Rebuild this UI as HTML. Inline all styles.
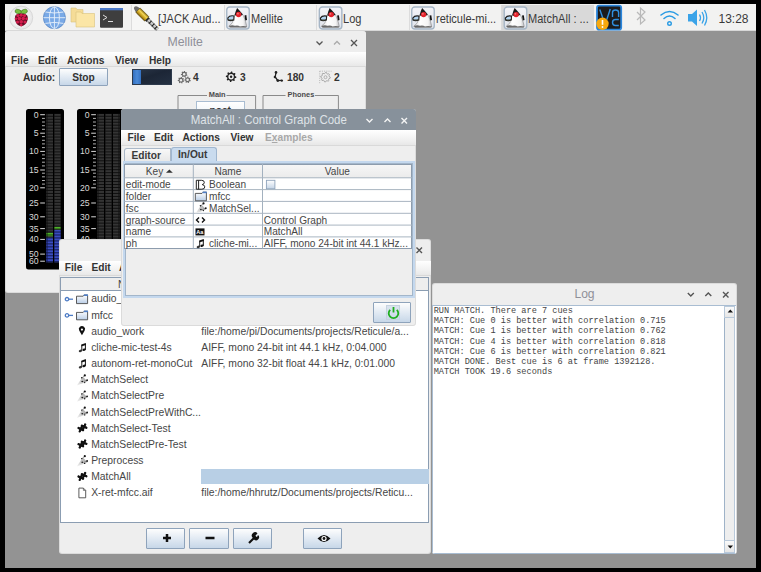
<!DOCTYPE html>
<html><head><meta charset="utf-8">
<style>
*{box-sizing:border-box;margin:0;padding:0}
html,body{width:761px;height:572px;overflow:hidden;background:#000}
body{position:relative;font-family:"Liberation Sans",sans-serif;font-size:9px;color:#333}
.a{position:absolute}
#desk{left:5px;top:4px;width:751px;height:564px;background:#939393}
/* taskbar */
#tb{left:5px;top:4px;width:751px;height:27px;background:#f2f2f1}
.tbt{font-size:12px;color:#3a3a3a;white-space:nowrap;line-height:14px;transform:scaleX(0.92);transform-origin:0 0}
/* windows */
.win{background:#eeeeee;overflow:hidden;border-radius:3px;box-shadow:inset 0 0 0 1px rgba(0,0,0,.08)}
.ttl{left:0;top:0;right:0;height:21px;text-align:center;color:#8f9099;font-size:12.6px;line-height:23px;white-space:nowrap}
.menu{font-weight:bold;font-size:10.2px;color:#333;white-space:nowrap}
.mb{background:linear-gradient(#ffffff,#f1f1f1 60%,#e6e6e6);box-shadow:inset 0 -1px 0 #d9d9d9}
.btn{border:1px solid #8ea3bb;border-radius:1px;background:linear-gradient(#fdfdfd,#dfe8f2 55%,#c7d7e8)}
.mono{font-family:"Liberation Mono",monospace}
</style></head><body>
<svg width="0" height="0" style="position:absolute"><defs>
<linearGradient id="fold" x1="0" y1="0" x2="0" y2="1"><stop offset="0" stop-color="#fff"/><stop offset="1" stop-color="#b9cde6"/></linearGradient>
<linearGradient id="chk" x1="0" y1="0" x2="0" y2="1"><stop offset="0" stop-color="#fff"/><stop offset="1" stop-color="#c4d4e6"/></linearGradient>
<linearGradient id="procg" x1="0" y1="1" x2="1" y2="0"><stop offset="0" stop-color="#f4f4f4"/><stop offset="1" stop-color="#9a9a9a"/></linearGradient>
<pattern id="seg" width="7" height="2.968" y="4.8" patternUnits="userSpaceOnUse"><rect width="7" height="2.968" fill="#0e0e0e"/><rect x="0.5" y="0" width="6" height="2" fill="#343434"/></pattern>
<pattern id="segg" width="7" height="2.968" y="4.8" patternUnits="userSpaceOnUse"><rect width="7" height="2.968" fill="#15300a"/><rect x="0.5" y="0" width="6" height="2" fill="#4fb52a"/></pattern>
<pattern id="segb" width="7" height="2.968" y="4.8" patternUnits="userSpaceOnUse"><rect width="7" height="2.968" fill="#0f1648"/><rect x="0.5" y="0" width="6" height="2" fill="#3a4cc0"/></pattern>
</defs></svg>
<div id="desk" class="a"></div>
<div id="tb" class="a">
</div>
<svg class="a" style="left:0;top:0" width="761" height="40">
 <defs>
  <linearGradient id="dukeb" x1="0" y1="0" x2="1" y2="0"><stop offset="0" stop-color="#d8d8d8"/><stop offset="0.35" stop-color="#ffffff"/><stop offset="0.8" stop-color="#f4f4f4"/><stop offset="1" stop-color="#bdbdc2"/></linearGradient>
  <linearGradient id="gold" x1="0" y1="0" x2="0" y2="1"><stop offset="0" stop-color="#8a6a08"/><stop offset="0.35" stop-color="#f2d558"/><stop offset="0.7" stop-color="#c9a020"/><stop offset="1" stop-color="#7a5a05"/></linearGradient>
  <linearGradient id="silv" x1="0" y1="0" x2="0" y2="1"><stop offset="0" stop-color="#666"/><stop offset="0.4" stop-color="#e8e8e8"/><stop offset="1" stop-color="#555"/></linearGradient>
  <linearGradient id="dk" x1="0" y1="0" x2="0" y2="1"><stop offset="0" stop-color="#f4f4f8"/><stop offset="1" stop-color="#dfe3ea"/></linearGradient>
  <g id="duke">
   <rect x="0.75" y="0.75" width="22.5" height="22" rx="3" fill="url(#dk)" stroke="#a6b6c6" stroke-width="1.4"/>
   <path d="M8.6 8.8 Q7.5 13 6.3 16.5 Q4.5 18.8 2.8 19.8 Q3 21 5 21 L19.5 21.2 Q21 20.8 20.6 19.5 Q19.5 15 18.8 13 Q17.8 10.5 16.8 8.4 Q13 10.5 8.6 8.8 Z" fill="url(#dukeb)" stroke="#777" stroke-width="0.5"/>
   <path d="M3 19.8 Q6 18.5 9 19.5 Q12 18.8 14 20.2 Q17 19.2 20.5 20.2 L20.6 21 L4 21.1Z" fill="#555" opacity="0.85"/>
   <path d="M11.1 1.8 Q14.2 5 16.9 8.2 Q13 11.2 8.6 8.9 Q9.5 5 11.1 1.8Z" fill="#1a1a1a"/>
   <circle cx="12.6" cy="8.3" r="2.7" fill="#e3232c"/>
   <circle cx="11.9" cy="7.5" r="0.9" fill="#f47a7e"/>
   <path d="M1.8 11.8 Q3.5 9 8 9.8 L7.8 13.8 Q4.2 15 2 13.8 Z" fill="#b2d4f0" stroke="#1e1e1e" stroke-width="1.1"/>
   <path d="M2 13.8 Q4.2 15 7.8 13.8 L7.8 12.7 Q4.5 13.8 2.1 12.7Z" fill="#3a3a2a"/>
   <path d="M18.5 9.3 L20.3 8.9 L21 13.8 L19.3 14.3 Z" fill="#151515"/>
  </g>
 </defs>
 <line x1="5" y1="30.5" x2="756" y2="30.5" stroke="#d8d8d8"/>
 <!-- raspberry -->
 <circle cx="21.1" cy="17.7" r="11.6" fill="#e9e9e9" stroke="#d2d2d2" stroke-width="0.8"/>
 <circle cx="20.6" cy="17.2" r="10" fill="#efefef"/>
 <ellipse cx="18.2" cy="11.6" rx="3.3" ry="2.2" transform="rotate(20 18.2 11.6)" fill="#79c043" stroke="#3b6a1c" stroke-width="0.5"/>
 <ellipse cx="24.2" cy="11.6" rx="3.3" ry="2.2" transform="rotate(-20 24.2 11.6)" fill="#79c043" stroke="#3b6a1c" stroke-width="0.5"/>
 <path d="M15 17 Q15 13.5 21.2 13.5 Q27.5 13.5 27.7 17 Q28.2 21 25 24.5 Q23 26.3 21.2 26.3 Q19.3 26.3 17.3 24.5 Q14.4 21 15 17Z" fill="#5e0c22"/>
 <g fill="#d51c4d"><circle cx="17.9" cy="15.6" r="1.6"/><circle cx="21.2" cy="15.2" r="1.6"/><circle cx="24.5" cy="15.6" r="1.6"/>
 <circle cx="16" cy="18.8" r="1.3"/><circle cx="19.3" cy="18.6" r="1.8"/><circle cx="23.2" cy="18.6" r="1.8"/><circle cx="26.5" cy="18.8" r="1.3"/>
 <circle cx="17.5" cy="22" r="1.6"/><circle cx="21.2" cy="21.8" r="1.8"/><circle cx="25" cy="22" r="1.6"/><circle cx="21.2" cy="25" r="1.4"/></g>
 <!-- globe -->
 <circle cx="54.4" cy="17.7" r="11" fill="#79a9e6" stroke="#5b88c4" stroke-width="0.8"/>
 <g stroke="#e8f1fb" stroke-width="0.9" fill="none"><ellipse cx="54.4" cy="17.7" rx="5" ry="10.8"/><line x1="54.4" y1="6.9" x2="54.4" y2="28.5"/><line x1="43.5" y1="17.7" x2="65.3" y2="17.7"/><path d="M45.3 12 Q54.4 14 63.5 12"/><path d="M45.3 23.4 Q54.4 21.4 63.5 23.4"/></g>
 <!-- folders -->
 <path d="M71 8 L76 8 L77 9.5 L83 9.5 L83 22 L71 22Z" fill="#f5dc97" stroke="#d9c27d" stroke-width="0.6"/>
 <path d="M76 12 L81 12 L82 13.5 L94.5 13.5 L94.5 27 L76 27Z" fill="#fbe6a6" stroke="#d9c27d" stroke-width="0.6"/>
 <!-- terminal -->
 <rect x="100" y="8" width="23" height="19.8" rx="1" fill="#3e3e3e"/>
 <rect x="100" y="8" width="23" height="2.3" fill="#4a78c8"/>
 <path d="M103 15 L107 17.5 L103 20" stroke="#ddd" stroke-width="1" fill="none"/>
 <line x1="108" y1="21.5" x2="113" y2="21.5" stroke="#ddd" stroke-width="1"/>
 <!-- separators -->
 <g stroke="#dcdcdc"><line x1="131.5" y1="5" x2="131.5" y2="30"/><line x1="224.5" y1="5" x2="224.5" y2="30"/><line x1="316.5" y1="5" x2="316.5" y2="30"/><line x1="409.5" y1="5" x2="409.5" y2="30"/><line x1="501.5" y1="5" x2="501.5" y2="30"/></g>
 <rect x="132" y="5" width="92" height="25" fill="#f6f6f5"/>
 <rect x="502" y="5" width="92" height="25" fill="#d9d9d9"/>
 <!-- jack -->
 <g transform="translate(134.5,6.8) rotate(44.5)">
  <path d="M0 0 Q0 -1.6 1.6 -2 L5 -3 L5 3 L1.6 2 Q0 1.6 0 0Z" fill="#6e6e6e"/>
  <rect x="4.8" y="-3.1" width="12.6" height="6.2" rx="0.8" fill="url(#gold)" stroke="#4a3a08" stroke-width="0.5"/>
  <rect x="17.2" y="-2.4" width="2" height="4.8" fill="#2a2a2a"/>
  <rect x="19" y="-1.9" width="13.6" height="3.8" rx="1.2" fill="url(#silv)"/>
  <g fill="#1e1e1e"><rect x="21.5" y="-1.9" width="1.1" height="3.8"/><rect x="25.5" y="-1.9" width="1.1" height="3.8"/><rect x="29.3" y="-1.9" width="1.1" height="3.8"/></g>
 </g>
 <use href="#duke" x="226" y="6.2"/>
 <use href="#duke" x="318.6" y="6.3"/>
 <use href="#duke" x="411" y="6.3"/>
 <use href="#duke" x="503.5" y="6.3"/>
 <!-- vnc -->
 <rect x="597" y="5.6" width="24.2" height="24" rx="2.2" fill="#1b1b1d" stroke="#2b86dc" stroke-width="1.8"/>
 <path d="M599.8 9.5 L602.8 18" stroke="#2f8fe0" stroke-width="1.4" fill="none"/>
 <path d="M610.3 9 L606.8 19.5" stroke="#2f8fe0" stroke-width="1.4" fill="none"/>
 <path d="M612.5 17 L612.5 12.5 Q612.5 10 615.5 10 Q618.6 10 618.6 12.5 L618.6 17" stroke="#2f8fe0" stroke-width="1.4" fill="none"/>
 <path d="M618.8 19.5 L615.5 19.5 Q612.5 19.5 612.5 22.5 Q612.5 25.5 615.5 25.5 L618.8 25.5" stroke="#2f8fe0" stroke-width="1.4" fill="none"/>
 <circle cx="602.5" cy="23.8" r="6.2" fill="#f7a80e"/>
 <path d="M602.5 20 L602.5 24.8" stroke="#fff" stroke-width="1.6"/><circle cx="602.5" cy="27" r="0.9" fill="#fff"/>
 <!-- bluetooth -->
 <path d="M637 12 L645 20 L640.5 24 L640.5 8 L645 12 L637 20" stroke="#b9b9b9" stroke-width="1.2" fill="none"/>
 <!-- wifi -->
 <g stroke="#2a9be3" stroke-width="1.6" fill="none" stroke-linecap="round"><path d="M661 15 Q669.5 8 678 15"/><path d="M664 18.5 Q669.5 13.5 675 18.5"/></g>
 <circle cx="669.5" cy="23.5" r="1.8" fill="none" stroke="#2a9be3" stroke-width="1.4"/>
 <!-- volume -->
 <path d="M688 14 L692 14 L697 9.5 L697 26 L692 21.5 L688 21.5Z" fill="#3aa3e8"/>
 <g stroke="#3aa3e8" stroke-width="1.3" fill="none"><path d="M699.5 14.5 Q701.5 17.8 699.5 21"/><path d="M702 12 Q705.5 17.8 702 23.5"/><path d="M704.5 10 Q709 17.8 704.5 25.5"/></g>
</svg>
<div class="a tbt" style="left:158px;top:12px">[JACK Aud...</div>
<div class="a tbt" style="left:251px;top:12px">Mellite</div>
<div class="a tbt" style="left:343px;top:12px">Log</div>
<div class="a tbt" style="left:435.5px;top:12px">reticule-mi...</div>
<div class="a tbt" style="left:528px;top:12px">MatchAll : ...</div>
<div class="a tbt" style="left:718.5px;top:12px;transform:none">13:28</div>

<!-- Mellite window -->
<div id="mel" class="a win" style="left:5px;top:31px;width:361px;height:262px">
  <div class="a ttl" style="background:#eeeeee"><span style="display:inline-block;transform:scaleX(0.975)">Mellite</span></div>
  <div class="a mb" style="left:0;top:21px;width:361px;height:15px"></div>
  <div class="a menu" style="left:6px;top:23.8px">File</div>
  <div class="a menu" style="left:33px;top:23.8px">Edit</div>
  <div class="a menu" style="left:62px;top:23.8px">Actions</div>
  <div class="a menu" style="left:110px;top:23.8px">View</div>
  <div class="a menu" style="left:144px;top:23.8px">Help</div>
  <div class="a menu" style="left:18px;top:41px">Audio:</div>
  <div class="a btn menu" style="left:54px;top:37.2px;width:49px;height:18.3px;text-align:center;line-height:18.5px">Stop</div>
  <div class="a" style="left:126.8px;top:38.4px;width:40.2px;height:15.2px;background:linear-gradient(160deg,#2a3648 0%,#1c2636 45%,#243042 100%);border:1px solid #2d3a4c"><div class="a" style="left:0;top:0;width:8.7px;height:13.2px;background:linear-gradient(90deg,#3470c0,#4a8ad8 50%,#3470c0)"></div></div>
  <div class="a menu" style="left:188px;top:41px">4</div>
  <div class="a menu" style="left:235px;top:41px">3</div>
  <div class="a menu" style="left:282px;top:41px">180</div>
  <div class="a menu" style="left:329px;top:41px">2</div>
  <svg class="a" style="left:0;top:0" width="361" height="262">
   
   
   
   <path d="M226.10,40.40 L227.13,40.50 L227.63,42.00 L228.32,42.37 L229.85,41.95 L230.51,42.76 L229.80,44.17 L230.02,44.92 L231.40,45.70 L231.30,46.73 L229.80,47.23 L229.43,47.92 L229.85,49.45 L229.04,50.11 L227.63,49.40 L226.88,49.62 L226.10,51.00 L225.07,50.90 L224.57,49.40 L223.88,49.03 L222.35,49.45 L221.69,48.64 L222.40,47.23 L222.18,46.48 L220.80,45.70 L220.90,44.67 L222.40,44.17 L222.77,43.48 L222.35,41.95 L223.16,41.29 L224.57,42.00 L225.32,41.78Z M228.79999999999998,45.7 A2.7,2.7 0 1 0 223.4,45.7 A2.7,2.7 0 1 0 228.79999999999998,45.7Z" fill="#222" fill-rule="evenodd"/><circle cx="226.1" cy="45.7" r="1.2" fill="#222"/><path d="M179.20,39.90 L179.93,39.98 L180.24,41.04 L180.70,41.32 L181.78,41.14 L182.17,41.77 L181.54,42.67 L181.60,43.20 L182.42,43.93 L182.17,44.63 L181.08,44.70 L180.70,45.08 L180.63,46.17 L179.93,46.42 L179.20,45.60 L178.67,45.54 L177.77,46.17 L177.14,45.78 L177.32,44.70 L177.04,44.24 L175.98,43.93 L175.90,43.20 L176.86,42.67 L177.04,42.16 L176.62,41.14 L177.14,40.62 L178.16,41.04 L178.67,40.86Z M180.5,43.2 A1.3,1.3 0 1 0 177.89999999999998,43.2 A1.3,1.3 0 1 0 180.5,43.2Z" fill="#6a6a6a" fill-rule="evenodd"/><path d="M176.00,45.90 L176.73,45.98 L177.04,47.04 L177.50,47.32 L178.58,47.14 L178.97,47.77 L178.34,48.67 L178.40,49.20 L179.22,49.93 L178.97,50.63 L177.88,50.70 L177.50,51.08 L177.43,52.17 L176.73,52.42 L176.00,51.60 L175.47,51.54 L174.57,52.17 L173.94,51.78 L174.12,50.70 L173.84,50.24 L172.78,49.93 L172.70,49.20 L173.66,48.67 L173.84,48.16 L173.42,47.14 L173.94,46.62 L174.96,47.04 L175.47,46.86Z M177.3,49.2 A1.3,1.3 0 1 0 174.7,49.2 A1.3,1.3 0 1 0 177.3,49.2Z" fill="#6a6a6a" fill-rule="evenodd"/><path d="M182.60,45.50 L183.33,45.58 L183.64,46.64 L184.10,46.92 L185.18,46.74 L185.57,47.37 L184.94,48.27 L185.00,48.80 L185.82,49.53 L185.57,50.23 L184.48,50.30 L184.10,50.68 L184.03,51.77 L183.33,52.02 L182.60,51.20 L182.07,51.14 L181.17,51.77 L180.54,51.38 L180.72,50.30 L180.44,49.84 L179.38,49.53 L179.30,48.80 L180.26,48.27 L180.44,47.76 L180.02,46.74 L180.54,46.22 L181.56,46.64 L182.07,46.46Z M183.9,48.8 A1.3,1.3 0 1 0 181.29999999999998,48.8 A1.3,1.3 0 1 0 183.9,48.8Z" fill="#6a6a6a" fill-rule="evenodd"/>
   <g stroke="#222" stroke-width="1.3" fill="none"><path d="M271 41.3 L270.2 46 L272.8 49.599999999999994 L276.6 49.400000000000006"/></g><g fill="#222"><circle cx="271" cy="41.400000000000006" r="1.3"/><circle cx="269.9" cy="46" r="1.2"/><circle cx="272.8" cy="49.599999999999994" r="1.4"/><circle cx="276.8" cy="49.599999999999994" r="1.2"/></g>
   <path d="M320.50,41.40 L321.44,41.49 L321.92,42.78 L322.56,43.12 L323.89,42.81 L324.49,43.53 L323.92,44.78 L324.13,45.48 L325.30,46.20 L325.21,47.14 L323.92,47.62 L323.58,48.26 L323.89,49.59 L323.17,50.19 L321.92,49.62 L321.22,49.83 L320.50,51.00 L319.56,50.91 L319.08,49.62 L318.44,49.28 L317.11,49.59 L316.51,48.87 L317.08,47.62 L316.87,46.92 L315.70,46.20 L315.79,45.26 L317.08,44.78 L317.42,44.14 L317.11,42.81 L317.83,42.21 L319.08,42.78 L319.78,42.57Z" fill="none" stroke="#9a9a9a" stroke-width="0.8"/><circle cx="320.5" cy="46.2" r="1.5" fill="none" stroke="#9a9a9a" stroke-width="0.7"/><path d="M314.7 40.2 L326.5 40.2 M314.7 40.2 L314.7 52.2" stroke="#aaa" stroke-width="0.8" stroke-dasharray="1 1.2" fill="none"/>
   <path d="M173 64.5 L202 64.5 M221.5 64.5 L250.6 64.5 L250.6 262 M173 64.5 L173 262" stroke="#8a8a8a" fill="none"/>
   <path d="M258 64.5 L280.5 64.5 M310 64.5 L333.4 64.5 L333.4 262 M258 64.5 L258 262" stroke="#8a8a8a" fill="none"/>
   <path d="M346 9 L352 15 M352 9 L346 15" stroke="#555" stroke-width="1.3"/>
   <path d="M311.5 10.5 L314.5 13.5 L317.5 10.5" stroke="#555" stroke-width="1.3" fill="none"/>
   <path d="M329 13.5 L332 10.5 L335 13.5" stroke="#aaa" stroke-width="1.3" fill="none"/>
  </svg>
  <div class="a" style="left:203.8px;top:59.2px;font-size:7.4px;font-weight:bold;color:#4a4a4a">Main</div>
  <div class="a" style="left:282.6px;top:59.2px;font-size:7.4px;font-weight:bold;color:#4a4a4a">Phones</div>
  <div class="a" style="left:191px;top:69.5px;width:48.5px;height:20px;background:linear-gradient(#fff,#e6eef6);border:1px solid #a9bdd2;text-align:center;font-weight:bold;font-size:10.2px;line-height:17px;color:#333">post</div>
  <div id="m1" class="a meter" style="left:21px;top:78px;width:38px;height:161px"><svg class="a" style="left:0;top:0" width="38" height="161"><rect x="0" y="0" width="38" height="160.5" rx="2.5" fill="#000"/><text x="12.6" y="8.6" text-anchor="end" font-size="8.7" fill="#d8d8d8" font-family="Liberation Sans">0</text><rect x="14.2" y="5.2" width="4.7" height="1" fill="#d8d8d8"/><text x="12.6" y="27.1" text-anchor="end" font-size="8.7" fill="#d8d8d8" font-family="Liberation Sans">5</text><rect x="14.2" y="23.7" width="4.7" height="1" fill="#d8d8d8"/><text x="12.6" y="45.3" text-anchor="end" font-size="8.7" fill="#d8d8d8" font-family="Liberation Sans">10</text><rect x="14.2" y="41.9" width="4.7" height="1" fill="#d8d8d8"/><text x="12.6" y="63.9" text-anchor="end" font-size="8.7" fill="#d8d8d8" font-family="Liberation Sans">15</text><rect x="14.2" y="60.5" width="4.7" height="1" fill="#d8d8d8"/><text x="12.6" y="81.7" text-anchor="end" font-size="8.7" fill="#d8d8d8" font-family="Liberation Sans">20</text><rect x="14.2" y="78.3" width="4.7" height="1" fill="#d8d8d8"/><text x="12.6" y="96.9" text-anchor="end" font-size="8.7" fill="#d8d8d8" font-family="Liberation Sans">25</text><rect x="14.2" y="93.5" width="4.7" height="1" fill="#d8d8d8"/><text x="12.6" y="110.7" text-anchor="end" font-size="8.7" fill="#d8d8d8" font-family="Liberation Sans">30</text><rect x="14.2" y="107.3" width="4.7" height="1" fill="#d8d8d8"/><text x="12.6" y="122.5" text-anchor="end" font-size="8.7" fill="#d8d8d8" font-family="Liberation Sans">35</text><rect x="14.2" y="119.1" width="4.7" height="1" fill="#d8d8d8"/><text x="12.6" y="133.3" text-anchor="end" font-size="8.7" fill="#d8d8d8" font-family="Liberation Sans">40</text><rect x="14.2" y="129.9" width="4.7" height="1" fill="#d8d8d8"/><text x="12.6" y="148.0" text-anchor="end" font-size="8.7" fill="#d8d8d8" font-family="Liberation Sans">50</text><rect x="14.2" y="144.6" width="4.7" height="1" fill="#d8d8d8"/><text x="12.6" y="155.1" text-anchor="end" font-size="8.7" fill="#d8d8d8" font-family="Liberation Sans">60</text><rect x="14.2" y="151.7" width="4.7" height="1" fill="#d8d8d8"/><rect x="16" y="8.9" width="2.9" height="1" fill="#b0b0b0"/><rect x="16" y="12.5" width="2.9" height="1" fill="#b0b0b0"/><rect x="16" y="16.2" width="2.9" height="1" fill="#b0b0b0"/><rect x="16" y="19.8" width="2.9" height="1" fill="#b0b0b0"/><rect x="16" y="27.1" width="2.9" height="1" fill="#b0b0b0"/><rect x="16" y="30.8" width="2.9" height="1" fill="#b0b0b0"/><rect x="16" y="34.4" width="2.9" height="1" fill="#b0b0b0"/><rect x="16" y="38.1" width="2.9" height="1" fill="#b0b0b0"/><rect x="16" y="45.4" width="2.9" height="1" fill="#b0b0b0"/><rect x="16" y="49.1" width="2.9" height="1" fill="#b0b0b0"/><rect x="16" y="52.7" width="2.9" height="1" fill="#b0b0b0"/><rect x="16" y="56.4" width="2.9" height="1" fill="#b0b0b0"/><rect x="16" y="63.7" width="2.9" height="1" fill="#b0b0b0"/><rect x="16" y="67.3" width="2.9" height="1" fill="#b0b0b0"/><rect x="16" y="71.0" width="2.9" height="1" fill="#b0b0b0"/><rect x="16" y="74.6" width="2.9" height="1" fill="#b0b0b0"/><rect x="20" y="4.8" width="7" height="148.5" fill="url(#seg)"/><rect x="20" y="123.8" width="7" height="3.4" fill="url(#segg)"/><rect x="20" y="128.6" width="7" height="24.7" fill="url(#segb)"/><rect x="28" y="4.8" width="7" height="148.5" fill="url(#seg)"/><rect x="28" y="117.9" width="7" height="2.4" fill="url(#segg)"/><rect x="28" y="120.9" width="7" height="32.4" fill="url(#segb)"/></svg></div>
  <div id="m2" class="a meter" style="left:72px;top:78px;width:60px;height:161px"><svg class="a" style="left:0;top:0" width="60" height="161"><rect x="0" y="0" width="60" height="160.5" rx="2.5" fill="#000"/><text x="12.6" y="8.6" text-anchor="end" font-size="8.7" fill="#d8d8d8" font-family="Liberation Sans">0</text><rect x="14.2" y="5.2" width="4.7" height="1" fill="#d8d8d8"/><text x="12.6" y="27.1" text-anchor="end" font-size="8.7" fill="#d8d8d8" font-family="Liberation Sans">5</text><rect x="14.2" y="23.7" width="4.7" height="1" fill="#d8d8d8"/><text x="12.6" y="45.3" text-anchor="end" font-size="8.7" fill="#d8d8d8" font-family="Liberation Sans">10</text><rect x="14.2" y="41.9" width="4.7" height="1" fill="#d8d8d8"/><text x="12.6" y="63.9" text-anchor="end" font-size="8.7" fill="#d8d8d8" font-family="Liberation Sans">15</text><rect x="14.2" y="60.5" width="4.7" height="1" fill="#d8d8d8"/><text x="12.6" y="81.7" text-anchor="end" font-size="8.7" fill="#d8d8d8" font-family="Liberation Sans">20</text><rect x="14.2" y="78.3" width="4.7" height="1" fill="#d8d8d8"/><text x="12.6" y="96.9" text-anchor="end" font-size="8.7" fill="#d8d8d8" font-family="Liberation Sans">25</text><rect x="14.2" y="93.5" width="4.7" height="1" fill="#d8d8d8"/><text x="12.6" y="110.7" text-anchor="end" font-size="8.7" fill="#d8d8d8" font-family="Liberation Sans">30</text><rect x="14.2" y="107.3" width="4.7" height="1" fill="#d8d8d8"/><text x="12.6" y="122.5" text-anchor="end" font-size="8.7" fill="#d8d8d8" font-family="Liberation Sans">35</text><rect x="14.2" y="119.1" width="4.7" height="1" fill="#d8d8d8"/><text x="12.6" y="133.3" text-anchor="end" font-size="8.7" fill="#d8d8d8" font-family="Liberation Sans">40</text><rect x="14.2" y="129.9" width="4.7" height="1" fill="#d8d8d8"/><text x="12.6" y="148.0" text-anchor="end" font-size="8.7" fill="#d8d8d8" font-family="Liberation Sans">50</text><rect x="14.2" y="144.6" width="4.7" height="1" fill="#d8d8d8"/><text x="12.6" y="155.1" text-anchor="end" font-size="8.7" fill="#d8d8d8" font-family="Liberation Sans">60</text><rect x="14.2" y="151.7" width="4.7" height="1" fill="#d8d8d8"/><rect x="16" y="8.9" width="2.9" height="1" fill="#b0b0b0"/><rect x="16" y="12.5" width="2.9" height="1" fill="#b0b0b0"/><rect x="16" y="16.2" width="2.9" height="1" fill="#b0b0b0"/><rect x="16" y="19.8" width="2.9" height="1" fill="#b0b0b0"/><rect x="16" y="27.1" width="2.9" height="1" fill="#b0b0b0"/><rect x="16" y="30.8" width="2.9" height="1" fill="#b0b0b0"/><rect x="16" y="34.4" width="2.9" height="1" fill="#b0b0b0"/><rect x="16" y="38.1" width="2.9" height="1" fill="#b0b0b0"/><rect x="16" y="45.4" width="2.9" height="1" fill="#b0b0b0"/><rect x="16" y="49.1" width="2.9" height="1" fill="#b0b0b0"/><rect x="16" y="52.7" width="2.9" height="1" fill="#b0b0b0"/><rect x="16" y="56.4" width="2.9" height="1" fill="#b0b0b0"/><rect x="16" y="63.7" width="2.9" height="1" fill="#b0b0b0"/><rect x="16" y="67.3" width="2.9" height="1" fill="#b0b0b0"/><rect x="16" y="71.0" width="2.9" height="1" fill="#b0b0b0"/><rect x="16" y="74.6" width="2.9" height="1" fill="#b0b0b0"/><rect x="20" y="4.8" width="7" height="148.5" fill="url(#seg)"/><rect x="28" y="4.8" width="7" height="148.5" fill="url(#seg)"/><rect x="36" y="4.8" width="7" height="148.5" fill="url(#seg)"/></svg></div>
</div>

<!-- File browser window -->
<div id="fb" class="a win" style="left:59px;top:239px;width:371.5px;height:315px">
<div class="a ttl" style="height:22px"></div>
<svg class="a" style="left:0;top:0" width="371" height="22"><path d="M357.5 8.5 L363 14 M363 8.5 L357.5 14" stroke="#555" stroke-width="1.4"/></svg>
<div class="a mb" style="left:0;top:22px;width:371.5px;height:15px"></div>
<div class="a menu" style="left:5.8px;top:22.8px">File</div>
<div class="a menu" style="left:32.5px;top:22.8px">Edit</div>
<div class="a menu" style="left:60px;top:22.8px">Actions</div>
<div class="a" style="left:1px;top:37.5px;width:369px;height:246px;background:#fff;border:1px solid #8b9db2"></div>
<div class="a" style="left:2px;top:38.5px;width:367px;height:13px;background:#eeeeee;border-bottom:1px solid #8b9db2"></div>
<div class="a" style="left:59px;top:38.5px;font-size:10.35px;line-height:13px;color:#464646">Name</div>
<div class="a" style="left:142px;top:230px;width:227.5px;height:15px;background:#b8cfe5"></div>
<div class="a" style="left:32.2px;top:53.4px;font-size:10.35px;line-height:13px;color:#464646;white-space:nowrap">audio_work</div>
<div class="a" style="left:32.2px;top:69.6px;font-size:10.35px;line-height:13px;color:#464646;white-space:nowrap">mfcc</div>
<div class="a" style="left:32.2px;top:85.7px;font-size:10.35px;line-height:13px;color:#464646;white-space:nowrap">audio_work</div>
<div class="a" style="left:142.3px;top:85.7px;font-size:10.35px;line-height:13px;color:#464646;white-space:nowrap">file:/home/pi/Documents/projects/Reticule/a...</div>
<div class="a" style="left:32.2px;top:101.9px;font-size:10.35px;line-height:13px;color:#464646;white-space:nowrap">cliche-mic-test-4s</div>
<div class="a" style="left:142.3px;top:101.9px;font-size:10.35px;line-height:13px;color:#464646;white-space:nowrap">AIFF, mono 24-bit int 44.1 kHz, 0:04.000</div>
<div class="a" style="left:32.2px;top:118.1px;font-size:10.35px;line-height:13px;color:#464646;white-space:nowrap">autonom-ret-monoCut</div>
<div class="a" style="left:142.3px;top:118.1px;font-size:10.35px;line-height:13px;color:#464646;white-space:nowrap">AIFF, mono 32-bit float 44.1 kHz, 0:01.000</div>
<div class="a" style="left:32.2px;top:134.2px;font-size:10.35px;line-height:13px;color:#464646;white-space:nowrap">MatchSelect</div>
<div class="a" style="left:32.2px;top:150.4px;font-size:10.35px;line-height:13px;color:#464646;white-space:nowrap">MatchSelectPre</div>
<div class="a" style="left:32.2px;top:166.6px;font-size:10.35px;line-height:13px;color:#464646;white-space:nowrap">MatchSelectPreWithC...</div>
<div class="a" style="left:32.2px;top:182.8px;font-size:10.35px;line-height:13px;color:#464646;white-space:nowrap">MatchSelect-Test</div>
<div class="a" style="left:32.2px;top:198.9px;font-size:10.35px;line-height:13px;color:#464646;white-space:nowrap">MatchSelectPre-Test</div>
<div class="a" style="left:32.2px;top:215.1px;font-size:10.35px;line-height:13px;color:#464646;white-space:nowrap">Preprocess</div>
<div class="a" style="left:32.2px;top:231.3px;font-size:10.35px;line-height:13px;color:#464646;white-space:nowrap">MatchAll</div>
<div class="a" style="left:32.2px;top:247.4px;font-size:10.35px;line-height:13px;color:#464646;white-space:nowrap">X-ret-mfcc.aif</div>
<div class="a" style="left:142.3px;top:247.4px;font-size:10.35px;line-height:13px;color:#464646;white-space:nowrap">file:/home/hhrutz/Documents/projects/Reticu...</div>
<svg class="a" style="left:0;top:0" width="371" height="315">
<g transform="translate(6.0,60.2)"><circle cx="2" cy="0" r="1.7" fill="none" stroke="#4d7cc6" stroke-width="1.3"/><line x1="3.7" y1="0" x2="8" y2="0" stroke="#4d7cc6" stroke-width="1.3"/></g>
<g transform="translate(17.0,55.4)"><path d="M0.5 1.8 L7.2 1.8 L8.2 0.6 L11.6 0.6 L11.6 9.2 L0.5 9.2Z" fill="url(#fold)" stroke="#4a4a4a" stroke-width="0.9"/><rect x="7.8" y="0" width="4.2" height="1.6" fill="#4f7fc8"/></g>
<g transform="translate(6.0,76.4)"><circle cx="2" cy="0" r="1.7" fill="none" stroke="#4d7cc6" stroke-width="1.3"/><line x1="3.7" y1="0" x2="8" y2="0" stroke="#4d7cc6" stroke-width="1.3"/></g>
<g transform="translate(17.0,71.6)"><path d="M0.5 1.8 L7.2 1.8 L8.2 0.6 L11.6 0.6 L11.6 9.2 L0.5 9.2Z" fill="url(#fold)" stroke="#4a4a4a" stroke-width="0.9"/><rect x="7.8" y="0" width="4.2" height="1.6" fill="#4f7fc8"/></g>
<g transform="translate(19.6,87.9)"><path d="M3.35 8.4 L0.7 3.8 A3.1 3.1 0 1 1 6 3.8 Z" fill="#111"/><circle cx="3.35" cy="2.7" r="1.1" fill="#fff"/></g>
<g transform="translate(19.6,103.9)"><path d="M2.7 1.6 L7.3 0 L7.3 2.1 L2.7 3.5Z" fill="#111"/><line x1="3.2" y1="2" x2="3.2" y2="7.8" stroke="#222" stroke-width="1"/><line x1="6.8" y1="1" x2="6.8" y2="6.6" stroke="#111" stroke-width="1"/><ellipse cx="1.9" cy="8" rx="1.8" ry="1.15" transform="rotate(-20 1.9 8)" fill="#333"/><ellipse cx="5.6" cy="6.8" rx="1.8" ry="1.15" transform="rotate(-20 5.6 6.8)" fill="#111"/></g>
<g transform="translate(19.6,120.1)"><path d="M2.7 1.6 L7.3 0 L7.3 2.1 L2.7 3.5Z" fill="#111"/><line x1="3.2" y1="2" x2="3.2" y2="7.8" stroke="#222" stroke-width="1"/><line x1="6.8" y1="1" x2="6.8" y2="6.6" stroke="#111" stroke-width="1"/><ellipse cx="1.9" cy="8" rx="1.8" ry="1.15" transform="rotate(-20 1.9 8)" fill="#333"/><ellipse cx="5.6" cy="6.8" rx="1.8" ry="1.15" transform="rotate(-20 5.6 6.8)" fill="#111"/></g>
<g transform="translate(17.8,135.2)"><defs></defs><path d="M0 11.4 L6 2.5 L10.8 7.2 Z" fill="url(#procg)"/><g stroke="#666" stroke-width="0.6"><line x1="4.9" y1="4" x2="8" y2="1.2"/><line x1="6.5" y1="7.5" x2="10.3" y2="6"/></g><g fill="#111"><circle cx="8" cy="1.2" r="1.1"/><circle cx="10.3" cy="6" r="0.9"/><circle cx="4.9" cy="3.6" r="0.7"/><circle cx="5.4" cy="7.3" r="0.8"/><circle cx="7.9" cy="8.4" r="0.7"/></g></g>
<g transform="translate(17.8,151.3)"><defs></defs><path d="M0 11.4 L6 2.5 L10.8 7.2 Z" fill="url(#procg)"/><g stroke="#666" stroke-width="0.6"><line x1="4.9" y1="4" x2="8" y2="1.2"/><line x1="6.5" y1="7.5" x2="10.3" y2="6"/></g><g fill="#111"><circle cx="8" cy="1.2" r="1.1"/><circle cx="10.3" cy="6" r="0.9"/><circle cx="4.9" cy="3.6" r="0.7"/><circle cx="5.4" cy="7.3" r="0.8"/><circle cx="7.9" cy="8.4" r="0.7"/></g></g>
<g transform="translate(17.8,167.5)"><defs></defs><path d="M0 11.4 L6 2.5 L10.8 7.2 Z" fill="url(#procg)"/><g stroke="#666" stroke-width="0.6"><line x1="4.9" y1="4" x2="8" y2="1.2"/><line x1="6.5" y1="7.5" x2="10.3" y2="6"/></g><g fill="#111"><circle cx="8" cy="1.2" r="1.1"/><circle cx="10.3" cy="6" r="0.9"/><circle cx="4.9" cy="3.6" r="0.7"/><circle cx="5.4" cy="7.3" r="0.8"/><circle cx="7.9" cy="8.4" r="0.7"/></g></g>
<g transform="translate(18.5,185.1)" fill="#111"><g transform="translate(3.3,5.0) rotate(25)"><rect x="-0.9" y="-2.9" width="1.8" height="5.8"/><rect x="-2.9" y="-0.9" width="5.8" height="1.8"/><circle cx="0" cy="-2.5" r="1.15"/><circle cx="0" cy="2.5" r="1.15"/><circle cx="-2.5" cy="0" r="1.15"/><circle cx="2.5" cy="0" r="1.15"/><circle r="1.7"/></g><g transform="translate(6.6,2.6) rotate(25)"><rect x="-0.9" y="-2.9" width="1.8" height="5.8"/><rect x="-2.9" y="-0.9" width="5.8" height="1.8"/><circle cx="0" cy="-2.5" r="1.15"/><circle cx="0" cy="2.5" r="1.15"/><circle cx="-2.5" cy="0" r="1.15"/><circle cx="2.5" cy="0" r="1.15"/><circle r="1.7"/></g></g>
<g transform="translate(18.5,201.2)" fill="#111"><g transform="translate(3.3,5.0) rotate(25)"><rect x="-0.9" y="-2.9" width="1.8" height="5.8"/><rect x="-2.9" y="-0.9" width="5.8" height="1.8"/><circle cx="0" cy="-2.5" r="1.15"/><circle cx="0" cy="2.5" r="1.15"/><circle cx="-2.5" cy="0" r="1.15"/><circle cx="2.5" cy="0" r="1.15"/><circle r="1.7"/></g><g transform="translate(6.6,2.6) rotate(25)"><rect x="-0.9" y="-2.9" width="1.8" height="5.8"/><rect x="-2.9" y="-0.9" width="5.8" height="1.8"/><circle cx="0" cy="-2.5" r="1.15"/><circle cx="0" cy="2.5" r="1.15"/><circle cx="-2.5" cy="0" r="1.15"/><circle cx="2.5" cy="0" r="1.15"/><circle r="1.7"/></g></g>
<g transform="translate(17.8,216.0)"><defs></defs><path d="M0 11.4 L6 2.5 L10.8 7.2 Z" fill="url(#procg)"/><g stroke="#666" stroke-width="0.6"><line x1="4.9" y1="4" x2="8" y2="1.2"/><line x1="6.5" y1="7.5" x2="10.3" y2="6"/></g><g fill="#111"><circle cx="8" cy="1.2" r="1.1"/><circle cx="10.3" cy="6" r="0.9"/><circle cx="4.9" cy="3.6" r="0.7"/><circle cx="5.4" cy="7.3" r="0.8"/><circle cx="7.9" cy="8.4" r="0.7"/></g></g>
<g transform="translate(18.5,233.6)" fill="#111"><g transform="translate(3.3,5.0) rotate(25)"><rect x="-0.9" y="-2.9" width="1.8" height="5.8"/><rect x="-2.9" y="-0.9" width="5.8" height="1.8"/><circle cx="0" cy="-2.5" r="1.15"/><circle cx="0" cy="2.5" r="1.15"/><circle cx="-2.5" cy="0" r="1.15"/><circle cx="2.5" cy="0" r="1.15"/><circle r="1.7"/></g><g transform="translate(6.6,2.6) rotate(25)"><rect x="-0.9" y="-2.9" width="1.8" height="5.8"/><rect x="-2.9" y="-0.9" width="5.8" height="1.8"/><circle cx="0" cy="-2.5" r="1.15"/><circle cx="0" cy="2.5" r="1.15"/><circle cx="-2.5" cy="0" r="1.15"/><circle cx="2.5" cy="0" r="1.15"/><circle r="1.7"/></g></g>
<g transform="translate(19.4,248.6)"><path d="M0.5 0.5 L5 0.5 L7.3 2.8 L7.3 10.2 L0.5 10.2Z" fill="#fff" stroke="#4a4a4a" stroke-width="0.9"/><path d="M5 0.5 L5 2.8 L7.3 2.8" fill="none" stroke="#4a4a4a" stroke-width="0.7"/></g>
</svg>
<div class="a btn" style="left:87.2px;top:288.5px;width:39.3px;height:21.5px"><svg class="a" style="left:14.5px;top:4.2px" width="10" height="10"><path d="M5 1 V9 M1 5 H9" stroke="#111" stroke-width="2.5"/></svg></div>
<div class="a btn" style="left:130.2px;top:288.5px;width:39.4px;height:21.5px"><svg class="a" style="left:14.5px;top:4.2px" width="10" height="10"><path d="M0.5 5 H9.5" stroke="#111" stroke-width="2.5"/></svg></div>
<div class="a btn" style="left:173.8px;top:288.5px;width:39.0px;height:21.5px"><svg class="a" style="left:13.5px;top:3.5px" width="13" height="13"><path d="M2 11 L7 6" stroke="#111" stroke-width="2.2"/><path d="M5.5 5.5 A3 3 0 0 1 10.5 1.5 L8.5 3.5 L9 4.5 L10 5 L11 3 A3 3 0 0 1 7 7.5Z" fill="#111"/></svg></div>
<div class="a btn" style="left:244.3px;top:288.5px;width:39.0px;height:21.5px"><svg class="a" style="left:12.5px;top:4.5px" width="14" height="11"><path d="M0.5 5.5 Q7 -1.5 13.5 5.5 Q7 12.5 0.5 5.5Z" fill="#111"/><circle cx="7" cy="5.5" r="2.6" fill="#fff"/><circle cx="7" cy="5.5" r="1.4" fill="#111"/></svg></div>
</div>

<!-- MatchAll window -->
<div id="ma" class="a win" style="left:121px;top:109px;width:295px;height:217px">
<div class="a ttl" style="background:#87919b;color:#dfe3e7"><span style="display:inline-block;transform:scaleX(0.91)">MatchAll : Control Graph Code</span></div>
<svg class="a" style="left:0;top:0" width="295" height="21"><g stroke="#f4f4f4" stroke-width="1.4" fill="none"><path d="M245.5 10 L248.5 13 L251.5 10"/><path d="M263.5 13 L266.5 10 L269.5 13"/><path d="M280.5 9 L286 14.5 M286 9 L280.5 14.5"/></g></svg>
<div class="a mb" style="left:0;top:21px;width:295px;height:16px"></div>
<div class="a menu" style="left:6.5px;top:23.1px">File</div>
<div class="a menu" style="left:33px;top:23.1px">Edit</div>
<div class="a menu" style="left:61.5px;top:23.1px">Actions</div>
<div class="a menu" style="left:109.5px;top:23.1px">View</div>
<div class="a menu" style="left:144px;top:23.1px;color:#a8a8a8">E<u>x</u>amples</div>
<div class="a" style="left:3.299999999999997px;top:38.69999999999999px;width:46.3px;height:13.5px;border:1px solid #aab8c8;border-bottom:none;border-radius:3px 0 0 0;background:linear-gradient(#f8f8f8,#e8e8e8)"></div>
<div class="a menu" style="left:10.5px;top:40.80000000000001px;color:#3a3a3a">Editor</div>
<div class="a" style="left:49.599999999999994px;top:37.5px;width:46.2px;height:15px;border:1px solid #9fb6cf;border-bottom:none;border-radius:3px 3px 0 0;background:#c9dbee"></div>
<div class="a menu" style="left:57px;top:40.30000000000001px;color:#3a3a3a">In/Out</div>
<div class="a" style="left:1.5px;top:51.80000000000001px;width:292.2px;height:137.2px;border:2px solid #c4d8ee;outline:1px solid #a3b6ca;outline-offset:-3px;background:#eeeeee"></div>
<div class="a" style="left:3.299999999999997px;top:55px;width:287.9px;height:84.5px;background:#fff;border:1px solid #8d9cad"></div>
<div class="a" style="left:4.299999999999997px;top:56px;width:285.9px;height:12.800000000000011px;background:linear-gradient(#f6f6f6,#ebebeb)"></div>
<div class="a" style="left:24.80000000000001px;top:55px;height:13.8px;font-size:10.1px;line-height:15.5px;color:#464646">Key</div>
<div class="a" style="left:72.30000000000001px;top:55px;width:69.19999999999999px;height:13.8px;text-align:center;font-size:10.1px;line-height:15.5px;color:#464646">Name</div>
<div class="a" style="left:141.5px;top:55px;width:149.7px;height:13.8px;text-align:center;font-size:10.1px;line-height:15.5px;color:#464646">Value</div>
<svg class="a" style="left:0;top:0" width="295" height="216">
<line x1="72.30000000000001" y1="55" x2="72.30000000000001" y2="139.5" stroke="#a3b1bf" stroke-width="1"/>
<line x1="141.5" y1="55" x2="141.5" y2="139.5" stroke="#a3b1bf" stroke-width="1"/>
<line x1="3.299999999999997" y1="68.80000000000001" x2="291.2" y2="68.80000000000001" stroke="#a9b5c1" stroke-width="1"/>
<line x1="3.299999999999997" y1="80.6" x2="291.2" y2="80.6" stroke="#a9b5c1" stroke-width="1"/>
<line x1="3.299999999999997" y1="92.4" x2="291.2" y2="92.4" stroke="#a9b5c1" stroke-width="1"/>
<line x1="3.299999999999997" y1="104.30000000000001" x2="291.2" y2="104.30000000000001" stroke="#a9b5c1" stroke-width="1"/>
<line x1="3.299999999999997" y1="116.1" x2="291.2" y2="116.1" stroke="#a9b5c1" stroke-width="1"/>
<line x1="3.299999999999997" y1="127.9" x2="291.2" y2="127.9" stroke="#a9b5c1" stroke-width="1"/>
<path d="M45 63.80000000000001 L48.400000000000006 60.599999999999994 L51.80000000000001 63.80000000000001Z" fill="#333"/>
<path d="M75.30000000000001 71.3 L80.5 71.3 Q83.30000000000001 71.3 83.30000000000001 73.4 Q83.30000000000001 75.2 81.19999999999999 75.6 Q83.80000000000001 76.0 83.80000000000001 77.9 Q83.80000000000001 80.2 80.80000000000001 80.2 L75.30000000000001 80.2 Z M77.6 71.3 L77.6 80.2" fill="none" stroke="#222" stroke-width="1"/>
<rect x="145.39999999999998" y="71.3" width="8.5" height="8.5" fill="url(#chk)" stroke="#8ea3bb" stroke-width="0.9"/>
<g transform="translate(73.8,82.6)"><path d="M0.5 1.8 L7.2 1.8 L8.2 0.6 L11.6 0.6 L11.6 9.2 L0.5 9.2Z" fill="url(#fold)" stroke="#4a4a4a" stroke-width="0.9"/><rect x="7.8" y="0" width="4.2" height="1.6" fill="#4f7fc8"/></g>
<g transform="translate(74.5,93.2)"><defs></defs><path d="M0 11.4 L6 2.5 L10.8 7.2 Z" fill="url(#procg)"/><g stroke="#666" stroke-width="0.6"><line x1="4.9" y1="4" x2="8" y2="1.2"/><line x1="6.5" y1="7.5" x2="10.3" y2="6"/></g><g fill="#111"><circle cx="8" cy="1.2" r="1.1"/><circle cx="10.3" cy="6" r="0.9"/><circle cx="4.9" cy="3.6" r="0.7"/><circle cx="5.4" cy="7.3" r="0.8"/><circle cx="7.9" cy="8.4" r="0.7"/></g></g>
<path d="M78 108.6 L75.5 111.1 L78 113.6 M81 108.6 L83.5 111.1 L81 113.6" stroke="#111" stroke-width="1.4" fill="none"/>
<rect x="74.5" y="119.4" width="9" height="7" fill="#111"/><text x="75.30000000000001" y="125.2" font-size="5.5" font-weight="bold" fill="#fff" font-family="Liberation Sans">Aa</text>
<g transform="translate(75.5,129.9)"><path d="M2.7 1.6 L7.3 0 L7.3 2.1 L2.7 3.5Z" fill="#111"/><line x1="3.2" y1="2" x2="3.2" y2="7.8" stroke="#222" stroke-width="1"/><line x1="6.8" y1="1" x2="6.8" y2="6.6" stroke="#111" stroke-width="1"/><ellipse cx="1.9" cy="8" rx="1.8" ry="1.15" transform="rotate(-20 1.9 8)" fill="#333"/><ellipse cx="5.6" cy="6.8" rx="1.8" ry="1.15" transform="rotate(-20 5.6 6.8)" fill="#111"/></g>
</svg>
<div class="a" style="left:4.799999999999997px;top:69.1px;font-size:10.1px;line-height:13px;color:#464646;white-space:nowrap">edit-mode</div>
<div class="a" style="left:88px;top:69.1px;font-size:10.1px;line-height:13px;color:#464646;white-space:nowrap">Boolean</div>
<div class="a" style="left:4.799999999999997px;top:80.9px;font-size:10.1px;line-height:13px;color:#464646;white-space:nowrap">folder</div>
<div class="a" style="left:88px;top:80.9px;font-size:10.1px;line-height:13px;color:#464646;white-space:nowrap">mfcc</div>
<div class="a" style="left:4.799999999999997px;top:92.7px;font-size:10.1px;line-height:13px;color:#464646;white-space:nowrap">fsc</div>
<div class="a" style="left:88px;top:92.7px;font-size:10.1px;line-height:13px;color:#464646;white-space:nowrap">MatchSel...</div>
<div class="a" style="left:4.799999999999997px;top:104.6px;font-size:10.1px;line-height:13px;color:#464646;white-space:nowrap">graph-source</div>
<div class="a" style="left:142.8px;top:104.6px;font-size:10.1px;line-height:13px;color:#464646;white-space:nowrap">Control Graph</div>
<div class="a" style="left:4.799999999999997px;top:116.4px;font-size:10.1px;line-height:13px;color:#464646;white-space:nowrap">name</div>
<div class="a" style="left:142.8px;top:116.4px;font-size:10.1px;line-height:13px;color:#464646;white-space:nowrap">MatchAll</div>
<div class="a" style="left:4.799999999999997px;top:128.2px;font-size:10.1px;line-height:13px;color:#464646;white-space:nowrap">ph</div>
<div class="a" style="left:88px;top:128.2px;font-size:10.1px;line-height:13px;color:#464646;white-space:nowrap">cliche-mi...</div>
<div class="a" style="left:142.8px;top:128.2px;font-size:10.1px;line-height:13px;color:#464646;white-space:nowrap">AIFF, mono 24-bit int 44.1 kHz...</div>
<div class="a btn" style="left:251.8px;top:192.5px;width:38.7px;height:21px"><div class="a" style="left:12px;top:2px;width:14px;height:15px;background:rgba(200,215,230,0.6);border:1px solid #c5d2df"></div><svg class="a" style="left:13px;top:3px" width="13" height="13"><path d="M3.2 3.8 A4.8 4.8 0 1 0 9.8 3.8" stroke="#1fae1f" stroke-width="1.8" fill="none"/><line x1="6.5" y1="1" x2="6.5" y2="6.5" stroke="#1fae1f" stroke-width="1.8"/></svg></div>
</div>

<!-- Log window -->
<div id="log" class="a win" style="left:432px;top:283px;width:305px;height:271px">
<div class="a ttl"><span style="display:inline-block;transform:scaleX(0.96)">Log</span></div>
<svg class="a" style="left:0;top:0" width="305" height="21"><g stroke="#555" stroke-width="1.4" fill="none"><path d="M255.8 10 L258.8 13 L261.8 10"/><path d="M273.3 13 L276.3 10 L279.3 13"/><path d="M291 9 L296.5 14.5 M296.5 9 L291 14.5"/></g></svg>
<div class="a" style="left:0px;top:21.5px;width:304px;height:249px;background:#fff;border:1px solid #a9bdd2;border-right:none"></div>
<div class="a" style="left:291.70000000000005px;top:22.5px;width:11.3px;height:247px;background:#eeeeee;border-left:1px solid #9fb3c8;border-right:1px solid #b9c9da"></div>
<div class="a" style="left:291.70000000000005px;top:22.5px;width:11.3px;height:12px;background:linear-gradient(#fafafa,#e6e6e6);border:1px solid #b9c9da"><svg class="a" style="left:2.2px;top:2.6px" width="7" height="5"><path d="M0.6 3.6 L3.3 0.6 L6 3.6Z" fill="#111"/></svg></div>
<div class="a" style="left:291.70000000000005px;top:257px;width:11.3px;height:12.5px;background:linear-gradient(#fafafa,#e6e6e6);border:1px solid #b9c9da"><svg class="a" style="left:2.2px;top:4px" width="7" height="5"><path d="M0.6 0.6 L3.3 3.6 L6 0.6Z" fill="#111"/></svg></div>
<div class="a mono" style="left:1.7px;top:22.6px;font-size:8.6px;line-height:10px;color:#444;white-space:pre">RUN MATCH. There are 7 cues</div>
<div class="a mono" style="left:1.7px;top:32.9px;font-size:8.6px;line-height:10px;color:#444;white-space:pre">MATCH: Cue 0 is better with correlation 0.715</div>
<div class="a mono" style="left:1.7px;top:43.2px;font-size:8.6px;line-height:10px;color:#444;white-space:pre">MATCH: Cue 1 is better with correlation 0.762</div>
<div class="a mono" style="left:1.7px;top:53.5px;font-size:8.6px;line-height:10px;color:#444;white-space:pre">MATCH: Cue 4 is better with correlation 0.818</div>
<div class="a mono" style="left:1.7px;top:63.8px;font-size:8.6px;line-height:10px;color:#444;white-space:pre">MATCH: Cue 6 is better with correlation 0.821</div>
<div class="a mono" style="left:1.7px;top:74.1px;font-size:8.6px;line-height:10px;color:#444;white-space:pre">MATCH DONE. Best cue is 6 at frame 1392128.</div>
<div class="a mono" style="left:1.7px;top:84.4px;font-size:8.6px;line-height:10px;color:#444;white-space:pre">MATCH TOOK 19.6 seconds</div>
</div>
</body></html>
